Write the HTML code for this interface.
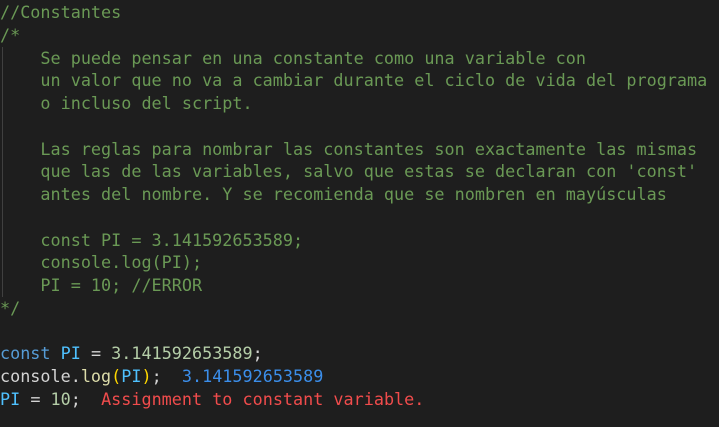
<!DOCTYPE html>
<html><head><style>
html,body{margin:0;background:#1e1e1e;width:719px;height:427px;overflow:hidden}
pre{margin:0;padding:1px 0 0 0;font-family:"DejaVu Sans Mono","Liberation Mono",monospace;font-size:16.8px;line-height:22.76px;color:#d4d4d4;white-space:pre;position:relative}
.c{color:#6a9955}.k{color:#569cd6}.v{color:#4fc1ff}.n{color:#b5cea8}.f{color:#dcdcaa}.p{color:#ffd700}.r{color:#3b8eea}.e{color:#f14c4c}
.g{position:absolute;left:2px;width:1px;background:#404040;top:47px;height:250px}
</style></head><body>
<pre><div class="g"></div><span class="c">//Constantes
/*
    Se puede pensar en una constante como una variable con
    un valor que no va a cambiar durante el ciclo de vida del programa
    o incluso del script.

    Las reglas para nombrar las constantes son exactamente las mismas
    que las de las variables, salvo que estas se declaran con 'const'
    antes del nombre. Y se recomienda que se nombren en mayúsculas

    const PI = 3.141592653589;
    console.log(PI);
    PI = 10; //ERROR
*/</span>

<span class="k">const</span> <span class="v">PI</span> = <span class="n">3.141592653589</span>;
console.<span class="f">log</span><span class="p">(</span><span class="v">PI</span><span class="p">)</span>;  <span class="r">3.141592653589</span>
<span class="v">PI</span> = <span class="n">10</span>;  <span class="e">Assignment to constant variable.</span></pre>
</body></html>
